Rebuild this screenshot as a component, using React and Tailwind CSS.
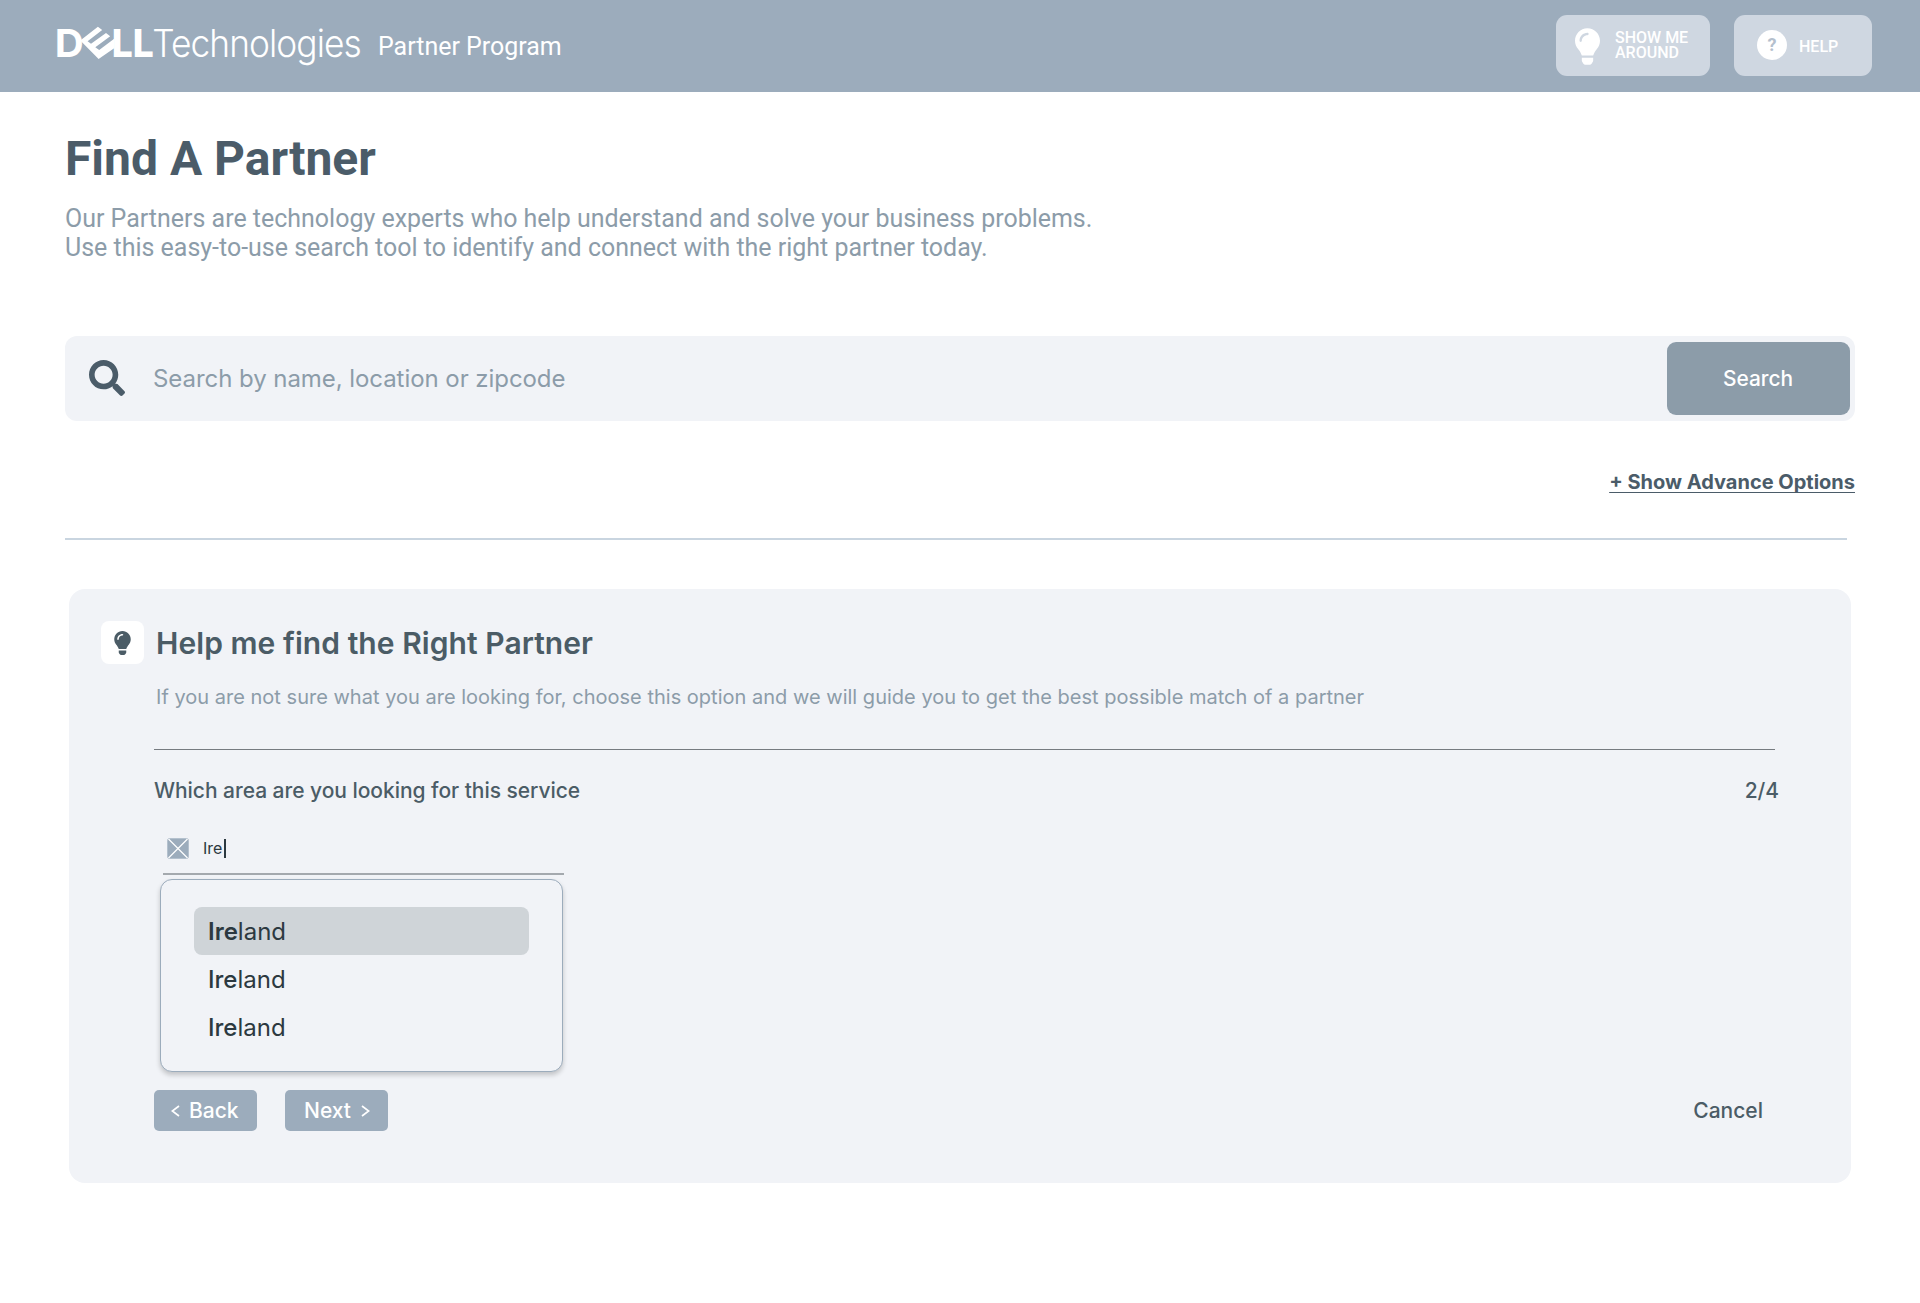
import React from "react";
import { FaLightbulb, FaSearch } from "react-icons/fa";

function DellLogo() {
  return (
    <svg
      className="block shrink-0 overflow-visible font-['Inter',sans-serif]"
      width="320"
      height="92"
      viewBox="50 0 320 92"
      fill="#ffffff"
      aria-label="Dell Technologies"
    >
      <text x="54.8" y="57" fontSize="38.5" fontWeight="750" textLength="29" lengthAdjust="spacingAndGlyphs">
        D
      </text>
      <polygon points="80.3,40.6 97.9,26.8 102.2,30 87.6,41.2 91,43.8 106,32.9 110.2,36.2 95.3,47.2 99.2,50.1 114.5,38.6 114.5,48 98.6,59" />
      <text x="111.8" y="57" fontSize="38.5" fontWeight="800" textLength="42" lengthAdjust="spacingAndGlyphs">
        LL
      </text>
      <text
        x="152.3"
        y="57"
        fontSize="38"
        fontWeight="290"
        letterSpacing="-1"
        textLength="208.5"
        lengthAdjust="spacingAndGlyphs"
      >
        Technologies
      </text>
    </svg>
  );
}

function Chevron({ direction }) {
  return (
    <svg width="9" height="12" viewBox="0 0 9 12" fill="none" stroke="currentColor" strokeWidth="1.7">
      <path d={direction === "left" ? "M8 1 1.3 6 8 11" : "M1 1 7.7 6 1 11"} />
    </svg>
  );
}

function Placeholder() {
  return (
    <svg className="block" width="22" height="21" viewBox="0 0 22 21">
      <rect x="0.5" y="0.5" width="21" height="20" rx="2" fill="#9cacbc" stroke="#b4c1ce" />
      <path d="M1.5 1 20.5 20M20.5 1 1.5 20" stroke="#ffffff" strokeWidth="1.2" />
    </svg>
  );
}

function Header() {
  return (
    <header className="flex h-[92px] items-center bg-[#9cacbc] pr-12 pl-[50px] font-['Roboto',sans-serif] text-white">
      <DellLogo />
      <span className="mt-px ml-[8px] text-[24.96px] leading-8">Partner Program</span>
      <div className="mb-[2px] ml-auto flex gap-6">
        <button className="flex h-[61px] w-[154px] items-center rounded-[11px] bg-[#cfd7e1] pl-[19px]">
          <FaLightbulb className="mt-[2px] h-[37px] w-[25px]" />
          <span className="ml-[15px] flex flex-col text-left text-base leading-[15px] font-medium">
            <span>SHOW ME</span>
            <span>AROUND</span>
          </span>
        </button>
        <button className="flex h-[61px] w-[138px] items-center rounded-[11px] bg-[#cfd7e1] pl-[23px]">
          <span className="flex size-[30px] items-center justify-center rounded-full bg-white text-[18px] leading-none font-bold text-[#b4c0cd]">
            ?
          </span>
          <span className="mt-[3px] ml-[12px] text-base leading-5 font-medium">HELP</span>
        </button>
      </div>
    </header>
  );
}

function SearchBar() {
  return (
    <div className="mt-[74px] flex h-[85px] items-center rounded-xl bg-[#f1f3f7] pr-[5px] pl-6">
      <FaSearch className="mb-px size-[36px] text-[#4b5c69]" />
      <span className="ml-[28px] text-2xl tracking-[-0.06px] text-[#8c9ca9]">
        Search by name, location or zipcode
      </span>
      <button className="ml-auto h-[73px] w-[183px] rounded-[9px] bg-[#8c9ca9] pr-px text-[20.9px] font-[450] text-white">
        Search
      </button>
    </div>
  );
}

function Option({ selected }) {
  return (
    <li
      className={
        selected
          ? "flex h-12 items-center rounded-lg bg-[#cfd4d8] pt-px pl-[14px]"
          : "flex h-12 items-center pt-px pl-[14px]"
      }
    >
      <span className={selected ? "font-semibold" : "font-medium"}>Ire</span>
      <span>land</span>
    </li>
  );
}

function AreaPicker() {
  return (
    <div className="ml-[6px] w-[404px]">
      <div className="ml-[3px] flex h-[51px] w-[401px] items-center border-b-2 border-[#a4a9ae] pl-1">
        <Placeholder />
        <span className="mb-px ml-[14px] text-base text-[#2c3940]">Ire</span>
        <span className="mb-px ml-[2px] h-[19px] w-[1.5px] bg-[#2c3940]" />
      </div>
      <ul className="mt-1 h-[193px] w-[403px] rounded-xl border border-[#9cacbc] px-[33px] pt-[27px] text-2xl text-[#2c3940] bg-[#f1f3f7] shadow-[0_3px_5px_rgba(0,0,0,0.2)]">
        <Option selected />
        <Option />
        <Option />
      </ul>
    </div>
  );
}

function GuidePanel() {
  return (
    <section className="mt-[49px] ml-1 h-[594px] w-[1782px] rounded-2xl bg-[#f1f3f7] pt-8 pr-[72px] pl-8">
      <div className="flex items-center">
        <div className="flex size-[43px] items-center justify-center rounded-lg bg-white text-[#4b5c66]">
          <FaLightbulb className="h-[24px] w-[17px]" />
        </div>
        <h2 className="ml-[12px] text-[30px] leading-10 font-semibold tracking-[0.06px] text-[#4b5c66]">
          Help me find the Right Partner
        </h2>
      </div>
      <p className="mt-5 ml-[55px] text-xl leading-[26px] tracking-[0.012px] text-[#8c9ca9]">
        If you are not sure what you are looking for, choose this option and we will guide you to get the best
        possible match of a partner
      </p>
      <div className="ml-[53px]">
        <hr className="mt-[39px] mr-[4px] border-[#767b80]" />
        <div className="mt-[26px] flex justify-between text-[21px] leading-[30px] font-[450] tracking-[-0.04px] text-[#4b5c66]">
          <span>Which area are you looking for this service</span>
          <span>2/4</span>
        </div>
        <div className="mt-[18px]">
          <AreaPicker />
        </div>
        <div className="mt-[18px] flex items-center text-[21px] font-[450]">
          <button className="flex h-[41px] w-[103px] items-center rounded-[5px] bg-[#9cacbc] pl-[17px] text-white">
            <Chevron direction="left" />
            <span className="ml-[9px] font-medium">Back</span>
          </button>
          <button className="ml-7 flex h-[41px] w-[103px] items-center rounded-[5px] bg-[#9cacbc] pl-[19px] text-white">
            <span className="font-medium">Next</span>
            <span className="ml-[10px]">
              <Chevron direction="right" />
            </span>
          </button>
          <button className="mr-[16px] ml-auto text-[#4b5c66]">Cancel</button>
        </div>
      </div>
    </section>
  );
}

export default function App() {
  return (
    <div className="min-h-[1303px] bg-white font-['Inter',sans-serif]">
      <Header />
      <main className="w-[1855px] pt-[39px] pl-[65px]">
        <h1 className="font-['Roboto',sans-serif] text-5xl leading-[56px] font-bold text-[#4b5c69]">
          Find A Partner
        </h1>
        <p className="mt-[17px] font-['Roboto',sans-serif] text-[24.98px] leading-[29px] text-[#8c9ca9]">
          Our Partners are technology experts who help understand and solve your business problems.
          <br />
          Use this easy-to-use search tool to identify and connect with the right partner today.
        </p>
        <SearchBar />
        <div className="mt-[46px] text-right text-xl leading-[30px] font-bold text-[#4b5c69]">
          <a className="underline decoration-1 underline-offset-[3px] [text-decoration-skip-ink:none]">
            + Show Advance Options
          </a>
        </div>
        <hr className="mt-[41px] mr-[8px] border-t-2 border-[#c9d5e0]" />
        <GuidePanel />
      </main>
    </div>
  );
}
